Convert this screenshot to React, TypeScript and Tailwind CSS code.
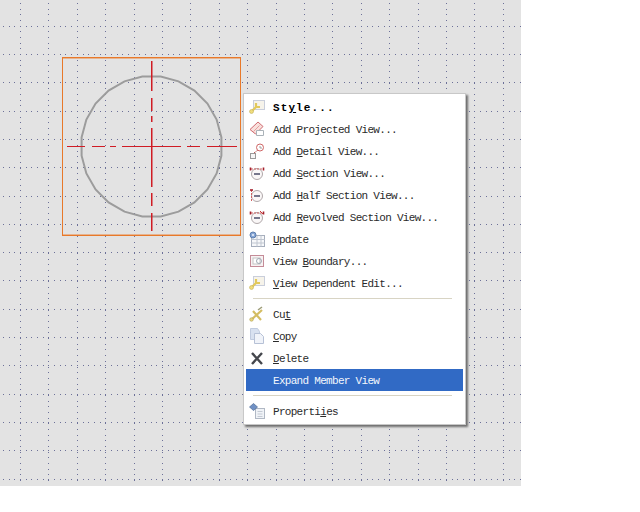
import type { ReactNode } from "react";

const gridX = Array.from({ length: 18 }, (_, i) => Math.round(20 + i * 28.4));
const gridY = Array.from({ length: 17 }, (_, i) => Math.round(25.7 + i * 28.3));
const stepsX = Array.from({ length: 92 }, (_, i) => Math.round(3 + i * 5.68));
const stepsY = Array.from({ length: 86 }, (_, i) => Math.round(3 + i * 5.68));

const circlePoints = Array.from({ length: 24 }, (_, i) => {
  const a = ((i + 0.5) * Math.PI) / 12;
  return `${151.5 + 70.5 * Math.cos(a)},${146.5 + 70.5 * Math.sin(a)}`;
}).join(" ");

const verticalDashes = "V91M@ 98V111M@ 116V122M@ 128V187M@ 193V206M@ 213V231";

function GridDots() {
  return (
    <svg className="block" width={521} height={486}>
      <g fill="#6c7098" shapeRendering="crispEdges">
        {gridY.flatMap((y) =>
          stepsX.map((x) => <rect key={`h${y}-${x}`} x={x} y={y} width={1} height={1} />)
        )}
        {gridX.flatMap((x) =>
          stepsY.map((y) => <rect key={`v${x}-${y}`} x={x} y={y} width={1} height={1} />)
        )}
      </g>
      <rect x={62.5} y={57.5} width={178} height={178} fill="none" stroke="#e8792a" />
      {/* soft edge next to the lines, the screenshot is a jpeg */}
      <path d="M63 58.5H240M63 234.5H240" stroke="#e8792a" strokeOpacity={0.45} />
      <polygon points={circlePoints} fill="none" stroke="#9c9c9c" strokeWidth={2} />
      <g stroke="#d01c24" fill="none">
        <path d="M67 146.5H85M92 146.5H105M110 146.5H116M122 146.5H181M187 146.5H200M207 146.5H237" />
        <path d={`M151.5 61${verticalDashes.replaceAll("@", "151.5")}`} />
        <path d={`M152.5 61${verticalDashes.replaceAll("@", "152.5")}`} strokeOpacity={0.5} />
      </g>
    </svg>
  );
}

const Wrench = () => (
  <>
    <rect x="5.500" y="2.500" width="11" height="9" fill="#f6f3ea" stroke="#c9cedb" />
    <path d="M3.500 13.500 8.500 8.500M8 5v4h4" stroke="#e2c95c" strokeWidth="2.200" fill="none" />
    <circle cx="3.500" cy="13.500" r="2" fill="#efdc7c" stroke="#b8a64e" strokeWidth=".5" />
  </>
);

const SectionCircle = ({ half }: { half?: boolean }) => (
  <>
    <circle cx="9" cy="10" r="5.500" fill="#faf7f7" stroke="#b0a8aa" />
    <rect x="6" y="9" width="6" height="2" fill="#77778c" />
    <path d={half ? "M3.500 4v11" : "M3 5h12"} stroke="#d06060" strokeDasharray="2 1" />
    <path d={half ? "M2 4h3" : "M2.500 3.500v3M15.500 3.500v3"} stroke="#a3202c" strokeWidth="1.600" />
  </>
);

const icons: Record<string, ReactNode> = {
  style: <Wrench />,
  projected: (
    <>
      <path d="M2 9.500 10 2l5 4.500-7.500 7.500z" fill="#f9e0dc" stroke="#cf6a70" />
      <path d="M5.500 11.500 11.500 5.500" stroke="#e2a0a0" />
      <path d="M8.500 10.500h7v5h-7z" fill="#fff" stroke="#aab2b8" />
    </>
  ),
  detail: (
    <>
      <rect x="2.500" y="11.500" width="5" height="5" fill="#f6f6f6" stroke="#9a9a9a" />
      <path d="M6 11 10 8" stroke="#b04c4c" strokeDasharray="2 1" />
      <circle cx="12" cy="5.500" r="3.500" fill="#fff" stroke="#cf6666" />
      <path d="M12 4v2h2" stroke="#a0a0a0" fill="none" />
    </>
  ),
  section: <SectionCircle />,
  half: <SectionCircle half />,
  revolved: (
    <>
      <SectionCircle />
      <path d="M12 3 15 6" stroke="#c43a3a" />
    </>
  ),
  update: (
    <>
      <rect x="3.500" y="5.500" width="13" height="11" fill="#f7f8fa" stroke="#a6aebc" />
      <path d="M3.500 9.500h13M3.500 13h13M9 5.500v11M13 5.500v11" stroke="#c0c6d0" />
      <circle cx="5" cy="5" r="3" fill="#86a6d6" stroke="#5e7fae" />
      <circle cx="5" cy="5" r="1.100" fill="#e8eef8" />
    </>
  ),
  boundary: (
    <>
      <rect x="2.500" y="3.500" width="13" height="11" fill="#f8f2f3" stroke="#c48c98" />
      <rect x="5" y="6" width="7" height="6" fill="#fff" stroke="#c4c4c4" />
      <circle cx="11" cy="9" r="2.500" fill="none" stroke="#a0aab4" />
    </>
  ),
  edit: <Wrench />,
  cut: (
    <>
      <path d="M3 15 14 5M5 6l8 9" stroke="#d4bd62" strokeWidth="2.200" />
      <path d="M10 5 14 2" stroke="#9c9c78" strokeWidth="1.500" />
      <circle cx="3.500" cy="14.500" r="1.800" fill="#e6d27a" stroke="#a89a4a" strokeWidth=".5" />
    </>
  ),
  copy: (
    <>
      <path d="M2.500 1.500h7l2 3v8h-9z" fill="#d8e1f0" stroke="#c0cbdf" />
      <path d="M6.500 6.500h6l3 3v7h-9z" fill="#f0f3f9" stroke="#b6c1d6" />
    </>
  ),
  del: <path d="M4 4 14 15M14 4 4 15" stroke="#45474d" strokeWidth="2.400" />,
  props: (
    <>
      <rect x="7.500" y="6.500" width="9" height="10" fill="#f0f3f7" stroke="#b0b8c4" />
      <path d="M9.500 9.500h5M9.500 12h5M9.500 14.500h5" stroke="#c4cad4" />
      <path d="M1.500 5 5.500 1.500 9.500 5 5.500 8.500z" fill="#6f90c4" stroke="#4c6894" strokeWidth=".7" />
    </>
  ),
};

type Item = {
  icon?: string;
  before: string;
  key?: string;
  after?: string;
  bold?: boolean;
  active?: boolean;
};

const firstGroup: Item[] = [
  { icon: "style", before: "St", key: "y", after: "le...", bold: true },
  { icon: "projected", before: "Add Pro", key: "j", after: "ected View..." },
  { icon: "detail", before: "Add ", key: "D", after: "etail View..." },
  { icon: "section", before: "Add ", key: "S", after: "ection View..." },
  { icon: "half", before: "Add ", key: "H", after: "alf Section View..." },
  { icon: "revolved", before: "Add ", key: "R", after: "evolved Section View..." },
  { icon: "update", before: "", key: "U", after: "pdate" },
  { icon: "boundary", before: "View ", key: "B", after: "oundary..." },
  { icon: "edit", before: "", key: "V", after: "iew Dependent Edit..." },
];

const secondGroup: Item[] = [
  { icon: "cut", before: "Cu", key: "t" },
  { icon: "copy", before: "", key: "C", after: "opy" },
  { icon: "del", before: "", key: "D", after: "elete" },
  { before: "Expand Member View", active: true },
];

function MenuRow({ item }: { item: Item }) {
  return (
    <div
      className={`flex h-[22px] items-center ${
        item.active ? "bg-[#316ac5] text-[#f4f7fc]" : "text-[#2a2a2a]"
      }`}
    >
      <div className="flex w-[27px] justify-start pl-[2px]">
        {item.icon && (
          <svg width={18} height={18} viewBox="0 0 18 18">
            {icons[item.icon]}
          </svg>
        )}
      </div>
      <span
        className={`whitespace-pre pt-[2px] ${
          item.bold ? "font-bold tracking-[1.100px] text-black" : ""
        }`}
      >
        {item.before}
        {item.key && <span className="underline underline-offset-1">{item.key}</span>}
        {item.after}
      </span>
    </div>
  );
}

const Separator = () => <div className="mx-[7px] my-[4px] h-[1px] w-[199px] bg-[#d8d4c4]" />;

export default function App() {
  return (
    <div className="relative h-[512px] w-[640px] overflow-hidden bg-white">
      <div className="h-[486px] w-[521px] bg-[#e3e3e3]">
        <GridDots />
      </div>
      <div className="absolute left-[243px] top-[93px] h-[332px] w-[223px] border border-[#c8c8c8] bg-white pl-[2px] pr-[2px] pt-[2px] font-['Liberation_Mono',monospace] text-[11px] tracking-[-0.7px] shadow-[2px_2px_2px_#6e6e6e]">
        {firstGroup.map((item) => (
          <MenuRow key={item.before + item.after} item={item} />
        ))}
        <Separator />
        {secondGroup.map((item) => (
          <MenuRow key={item.before + item.after} item={item} />
        ))}
        <Separator />
        <MenuRow item={{ icon: "props", before: "Properti", key: "i", after: "es" }} />
      </div>
    </div>
  );
}
